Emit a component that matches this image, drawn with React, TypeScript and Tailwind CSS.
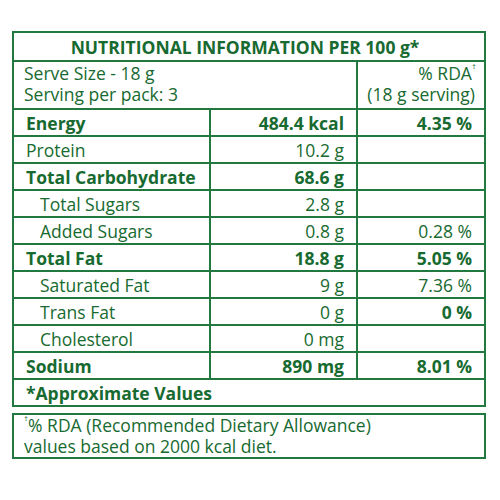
import React from 'react';

type Row = {
  label: string;
  value: string;
  rda?: string;
  bold?: boolean;
  rdaBold?: boolean;
  indent?: boolean;
};

const rows: Row[] = [
  { label: 'Energy', value: '484.4 kcal', rda: '4.35 %', bold: true, rdaBold: true },
  { label: 'Protein', value: '10.2 g' },
  { label: 'Total Carbohydrate', value: '68.6 g', bold: true },
  { label: 'Total Sugars', value: '2.8 g', indent: true },
  { label: 'Added Sugars', value: '0.8 g', rda: '0.28 %', indent: true },
  { label: 'Total Fat', value: '18.8 g', rda: '5.05 %', bold: true, rdaBold: true },
  { label: 'Saturated Fat', value: '9 g', rda: '7.36 %', indent: true },
  { label: 'Trans Fat', value: '0 g', rda: '0 %', indent: true, rdaBold: true },
  { label: 'Cholesterol', value: '0 mg', indent: true },
  { label: 'Sodium', value: '890 mg', rda: '8.01 %', bold: true, rdaBold: true },
];

export default function App() {
  return (
    <div className="w-[500px] h-[500px] bg-white pt-[31px] pl-[12px] text-[#176a30] text-[17.5px] leading-[20px]" style={{ fontFamily: '"Open Sans", Lato, sans-serif' }}>
      <div className="w-[474px] border-2 border-[#22793f]">
        <div className="h-[29px] border-b-2 border-[#22793f] flex items-center justify-center font-bold text-[17.5px] pr-[8px]">
          NUTRITIONAL INFORMATION PER 100 g*
        </div>
        <div className="h-[48px] border-b-2 border-[#22793f] grid grid-cols-[344px_1fr]">
          <div className="border-r-2 border-[#22793f] pl-[10px] pt-[1px] leading-[21px]">
            <div>Serve Size - 18 g</div>
            <div>Serving per pack: 3</div>
          </div>
          <div className="pr-[8px] pt-[1px] text-right leading-[21px]">
            <div>% RDA<sup className="text-[8px] align-top relative top-[3px]">†</sup></div>
            <div className="pr-[1px]">(18 g serving)</div>
          </div>
        </div>
        {rows.map((r) => (
          <div key={r.label} className="h-[27px] border-b-2 border-[#22793f] grid grid-cols-[197px_147px_1fr]">
            <div className={`border-r-2 border-[#22793f] flex items-center ${r.indent ? 'pl-[26px]' : 'pl-[12px]'} ${r.bold ? 'font-bold' : ''}`}>
              {r.label}
            </div>
            <div className={`border-r-2 border-[#22793f] flex items-center justify-end pr-[12px] ${r.bold ? 'font-bold' : ''}`}>
              {r.value}
            </div>
            <div className={`flex items-center justify-end pr-[12px] ${r.rdaBold ? 'font-bold' : ''}`}>
              {r.rda ?? ''}
            </div>
          </div>
        ))}
        <div className="h-[25px] flex items-center pl-[12px] font-bold">*Approximate Values</div>
      </div>
      <div className="w-[474px] mt-[6px] h-[46px] border-2 border-[#22793f] pl-[10px] leading-[21px]">
        <div><sup className="text-[8px] align-top relative top-[3px]">†</sup>% RDA (Recommended Dietary Allowance)</div>
        <div>values based on 2000 kcal diet.</div>
      </div>
    </div>
  );
}
